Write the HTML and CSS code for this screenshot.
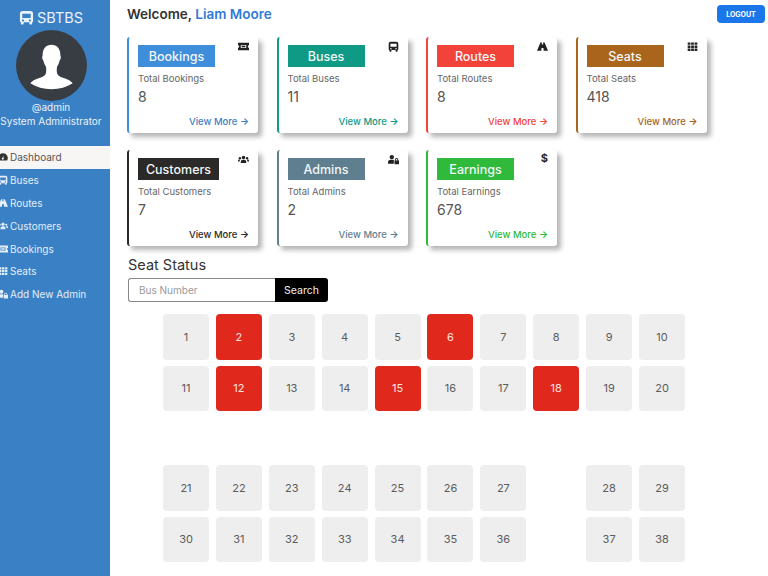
FILE: index.html
```html
<!DOCTYPE html>
<html lang="en">
<head>
  <meta charset="UTF-8" />
  <meta name="viewport" content="width=device-width, initial-scale=1.0" />
  <title>SBTBS Dashboard</title>
  <link rel="stylesheet" href="styles.css">
</head>
<body>
  <svg class="defs" width="0" height="0">
    <symbol id="i-bus" viewBox="0 0 16 16">
      <path fill-rule="evenodd" d="M4 1h8a3 3 0 0 1 3 3v8a1 1 0 0 1-1 1v1.500a1 1 0 0 1-1 1h-1a1 1 0 0 1-1-1V13H5v1.500a1 1 0 0 1-1 1H3a1 1 0 0 1-1-1V13a1 1 0 0 1-1-1V4a3 3 0 0 1 3-3zM3.500 4v4.500h9V4zM4.300 10a1.100 1.100 0 1 0 0 2.200 1.100 1.100 0 0 0 0-2.200zm7.400 0a1.100 1.100 0 1 0 0 2.200 1.100 1.100 0 0 0 0-2.200z"/>
    </symbol>
    <symbol id="i-ticket" viewBox="0 0 16 16">
      <path fill-rule="evenodd" d="M0 2.500h16v3.800a1.700 1.700 0 0 0 0 3.400v3.800H0V9.700a1.700 1.700 0 0 0 0-3.400zm4 3.200v4.600h8V5.700z"/>
      <path d="M5.200 6.800h5.600v2.400H5.200z"/>
    </symbol>
    <symbol id="i-road" viewBox="0 0 16 16">
      <path d="M5 2h2.200l-.2 3h2l-.2-3H11l5 12H9.700L9.400 10H6.600l-.3 4H0z"/>
    </symbol>
    <symbol id="i-grid" viewBox="0 0 16 16">
      <path d="M1 2h4v3.500H1zM6 2h4v3.500H6zM11 2h4v3.500h-4zM1 6.500h4V10H1zM6 6.500h4V10H6zM11 6.500h4V10h-4zM1 11h4v3.500H1zM6 11h4v3.500H6zM11 11h4v3.500h-4z"/>
    </symbol>
    <symbol id="i-users" viewBox="0 0 16 16">
      <circle cx="8" cy="5" r="2.500"/><circle cx="2.800" cy="6" r="1.700"/><circle cx="13.200" cy="6" r="1.700"/>
      <path d="M4 13v-1.800A3 3 0 0 1 7 8.500h2a3 3 0 0 1 3 2.700V13zM0 11V9.800C0 8.700.9 8 2 8h1.300a4 4 0 0 0-.9 3zM16 11V9.800c0-1.100-.9-1.800-2-1.800h-1.300a4 4 0 0 1 .9 3z"/>
    </symbol>
    <symbol id="i-admin" viewBox="0 0 16 16">
      <circle cx="5.500" cy="4.500" r="3.200"/>
      <path d="M0 14v-1.500A4 4 0 0 1 4 8.500h3a4 4 0 0 1 1.500.3V14z"/>
      <path fill-rule="evenodd" d="M10 9.500V8.300a2.500 2.500 0 0 1 5 0v1.200h1V15H9.500V9.500zm1.300 0h2.400V8.300a1.200 1.200 0 0 0-2.400 0z"/>
    </symbol>
    <symbol id="i-gauge" viewBox="0 0 16 16">
      <path fill-rule="evenodd" d="M8 2a7.500 7.500 0 0 1 6.500 11.500h-13A7.500 7.500 0 0 1 8 2zm1 3.500L7.200 9.200a1.500 1.500 0 1 0 1.500.5z"/>
    </symbol>
  </svg>

  <div class="app">
    <aside class="sidebar">
      <div class="brand">
        <svg class="brand-icon"><use href="#i-bus"/></svg>
        <span>SBTBS</span>
      </div>
      <div class="profile">
        <svg class="avatar" viewBox="0 0 72 72">
          <circle cx="36" cy="36" r="36" fill="#383d43"/>
          <path fill="#fff" d="M36 15c5.500 0 9 4 9 10.500 0 1 .7 1.500.4 3-.2 1.500-1 2-1.300 3-.4 2-1.300 4-2.400 5.500-.5 2.500-.5 5 0 7 1 2.500 4 3.800 7.500 5 3.500 1.300 6.500 2.700 8.300 5-6 4-13.500 6-21.500 6s-15.500-2-21.500-6c1.800-2.300 4.800-3.700 8.300-5 3.500-1.200 6.500-2.500 7.500-5 .5-2 .5-4.500 0-7-1.100-1.500-2-3.500-2.400-5.500-.3-1-1.100-1.500-1.300-3-.3-1.500.4-2 .4-3C27 19 30.500 15 36 15z"/>
        </svg>
        <div class="profile-name">@admin</div>
        <div class="profile-role">System Administrator</div>
      </div>
      <nav class="nav">
        <a class="nav-item active"><svg><use href="#i-gauge"/></svg>Dashboard</a>
        <a class="nav-item"><svg><use href="#i-bus"/></svg>Buses</a>
        <a class="nav-item"><svg><use href="#i-road"/></svg>Routes</a>
        <a class="nav-item"><svg><use href="#i-users"/></svg>Customers</a>
        <a class="nav-item"><svg><use href="#i-ticket"/></svg>Bookings</a>
        <a class="nav-item"><svg><use href="#i-grid"/></svg>Seats</a>
        <a class="nav-item"><svg><use href="#i-admin"/></svg>Add New Admin</a>
      </nav>
    </aside>

    <main class="main">
      <header class="topbar">
        <h1 class="welcome">Welcome, <span>Liam Moore</span></h1>
        <button class="logout">LOGOUT</button>
      </header>

      <section class="cards">
        <div class="card c-bookings">
          <svg class="card-icon"><use href="#i-ticket"/></svg>
          <div class="card-title">Bookings</div>
          <div class="card-label">Total Bookings</div>
          <div class="card-num">8</div>
          <a class="card-more">View More <span class="arrow">&rarr;</span></a>
        </div>
        <div class="card c-buses">
          <svg class="card-icon"><use href="#i-bus"/></svg>
          <div class="card-title">Buses</div>
          <div class="card-label">Total Buses</div>
          <div class="card-num">11</div>
          <a class="card-more">View More <span class="arrow">&rarr;</span></a>
        </div>
        <div class="card c-routes">
          <svg class="card-icon"><use href="#i-road"/></svg>
          <div class="card-title">Routes</div>
          <div class="card-label">Total Routes</div>
          <div class="card-num">8</div>
          <a class="card-more">View More <span class="arrow">&rarr;</span></a>
        </div>
        <div class="card c-seats">
          <svg class="card-icon"><use href="#i-grid"/></svg>
          <div class="card-title">Seats</div>
          <div class="card-label">Total Seats</div>
          <div class="card-num">418</div>
          <a class="card-more">View More <span class="arrow">&rarr;</span></a>
        </div>
        <div class="card c-customers">
          <svg class="card-icon"><use href="#i-users"/></svg>
          <div class="card-title wide">Customers</div>
          <div class="card-label">Total Customers</div>
          <div class="card-num">7</div>
          <a class="card-more">View More <span class="arrow">&rarr;</span></a>
        </div>
        <div class="card c-admins">
          <svg class="card-icon"><use href="#i-admin"/></svg>
          <div class="card-title">Admins</div>
          <div class="card-label">Total Admins</div>
          <div class="card-num">2</div>
          <a class="card-more">View More <span class="arrow">&rarr;</span></a>
        </div>
        <div class="card c-earnings">
          <span class="card-dollar">$</span>
          <div class="card-title">Earnings</div>
          <div class="card-label">Total Earnings</div>
          <div class="card-num">678</div>
          <a class="card-more">View More <span class="arrow">&rarr;</span></a>
        </div>
      </section>

      <h2 class="status-title">Seat Status</h2>
      <form class="search">
        <input type="text" placeholder="Bus Number" />
        <button type="button">Search</button>
      </form>

      <section class="seats">
        <div class="seat">1</div><div class="seat taken">2</div><div class="seat">3</div><div class="seat">4</div><div class="seat">5</div><div class="seat taken">6</div><div class="seat">7</div><div class="seat">8</div><div class="seat">9</div><div class="seat">10</div>
        <div class="seat">11</div><div class="seat taken">12</div><div class="seat">13</div><div class="seat">14</div><div class="seat taken">15</div><div class="seat">16</div><div class="seat">17</div><div class="seat taken">18</div><div class="seat">19</div><div class="seat">20</div>
      </section>
      <section class="seats lower">
        <div class="seat">21</div><div class="seat">22</div><div class="seat">23</div><div class="seat">24</div><div class="seat">25</div><div class="seat">26</div><div class="seat">27</div><div class="gap"></div><div class="seat">28</div><div class="seat">29</div>
        <div class="seat">30</div><div class="seat">31</div><div class="seat">32</div><div class="seat">33</div><div class="seat">34</div><div class="seat">35</div><div class="seat">36</div><div class="gap"></div><div class="seat">37</div><div class="seat">38</div>
      </section>
    </main>
  </div>
</body>
</html>
```

FILE: styles.css
```css
* { box-sizing: border-box; }
html, body { margin: 0; height: 100%; overflow: hidden; }
body { background: #fff; color: #444; font-family: Inter, "Open Sans", sans-serif; }
.defs { position: absolute; }
svg { fill: currentColor; }

.app { display: flex; height: 576px; }

.sidebar { flex: 0 0 110px; min-width: 0; background: #3a80c5; color: #e9f1f9; }
.brand { display: flex; align-items: center; justify-content: center; gap: 3px; height: 30px; padding: 4px 8px 0 0; font-size: 14.500px; }
.brand-icon { width: 15px; height: 15px; }
.profile { width: 102px; text-align: center; font-size: 10px; line-height: 14px; white-space: nowrap; }
.avatar { display: block; width: 71px; height: 71px; margin: 0 auto -1px; }
.nav { margin-top: 18px; }
.nav-item { display: flex; align-items: center; gap: 2px; height: 22.800px; font-size: 10px; color: #e4eef8; }
.nav-item svg { width: 10px; height: 10px; margin-left: -2px; flex: none; }
.nav-item.active { background: #f8f6f4; color: #555; }
.nav-item.active svg { color: #333; }

.main { flex: 1; padding: 0 3px 0 17px; min-width: 0; }
.topbar { display: flex; justify-content: space-between; align-items: flex-start; height: 37px; padding-top: 5px; }
.welcome { margin: 0; font-size: 13.500px; line-height: 18px; font-weight: 600; color: #333; }
.welcome span { color: #2f7ad8; }
.logout { width: 48px; height: 18px; padding: 0; border: none; border-radius: 4px; background: #1b76ea; color: #fff; font: 700 7px Inter, sans-serif; }

.cards { display: grid; grid-template-columns: repeat(4, 131px); column-gap: 18.500px; row-gap: 17px; }
.card { position: relative; height: 96px; padding: 8px 10px 0 9px; border-left: 2px solid var(--tone); border-radius: 3px; background: #fff; box-shadow: 4px 4px 5px #b5b5b5; }
.card-title { display: flex; width: 77px; height: 22px; align-items: center; justify-content: center; background: var(--tone); color: #f2f6f8; font-size: 12.500px; font-weight: 500; }
.card-title.wide { width: 81px; }
.card-label { margin-top: 6px; font-size: 9.500px; line-height: 12px; color: #666; }
.card-num { margin-top: 3px; font-size: 14px; line-height: 18px; color: #555; }
.card-more { position: absolute; right: 9px; bottom: 5px; font-size: 9.500px; line-height: 12px; font-weight: 500; color: var(--tone); }
.arrow { font-weight: 700; }
.card-icon { position: absolute; top: 4px; right: 9px; width: 11px; height: 11px; color: #222; }
.card-dollar { position: absolute; top: 1px; right: 9px; font-size: 11px; font-weight: 700; color: #222; }

.c-bookings { --tone: #3f8edb; }
.c-buses { --tone: #0f9a85; }
.c-routes { --tone: #f2433b; }
.c-seats { --tone: #a8651b; }
.c-customers { --tone: #2c2a28; }
.c-admins { --tone: #5f7f90; }
.c-earnings { --tone: #2fba3b; }
.c-bookings .card-more { color: #3f7fc4; }

.status-title { margin: 10px 0 4px 1px; font-size: 14.500px; line-height: 18px; font-weight: 400; color: #333; }
.search { display: flex; width: 200px; height: 24px; margin-left: 1px; }
.search input { width: 147px; padding: 0 10px; border: 1px solid #888; border-right: none; border-radius: 3px 0 0 3px; font: 10px Inter, sans-serif; outline: none; }
.search input::placeholder { color: #999; }
.search button { width: 53px; padding: 0; border: none; border-radius: 0 3px 3px 0; background: #000; color: #eee; font: 10.500px Inter, sans-serif; }

.seats { display: grid; grid-template-columns: repeat(10, 46px); column-gap: 6.900px; row-gap: 6px; margin: 12px 0 0 36px; }
.seats.lower { margin-top: 54px; }
.seat { display: flex; height: 45.500px; align-items: center; justify-content: center; border-radius: 4px; background: #eeeeee; color: #5c5c5c; font-size: 11px; }
.seat.taken { background: #e0281d; color: #fde5e0; }
```
